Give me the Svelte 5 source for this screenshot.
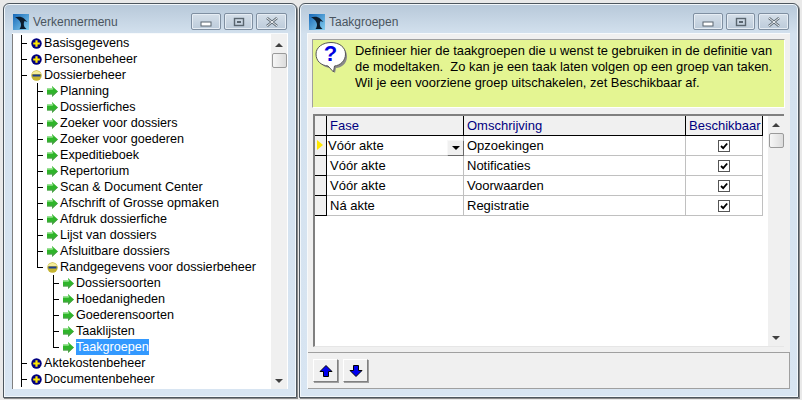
<script>
	// tree: g = guide cells in front of the icon (p pipe, b blank, t tee, l last)
	const tree = [
		{ g: 't', icon: 'plus', label: 'Basisgegevens' },
		{ g: 't', icon: 'plus', label: 'Personenbeheer' },
		{ g: 't', icon: 'minus', label: 'Dossierbeheer' },
		{ g: 'pt', icon: 'arrow', label: 'Planning' },
		{ g: 'pt', icon: 'arrow', label: 'Dossierfiches' },
		{ g: 'pt', icon: 'arrow', label: 'Zoeker voor dossiers' },
		{ g: 'pt', icon: 'arrow', label: 'Zoeker voor goederen' },
		{ g: 'pt', icon: 'arrow', label: 'Expeditieboek' },
		{ g: 'pt', icon: 'arrow', label: 'Repertorium' },
		{ g: 'pt', icon: 'arrow', label: 'Scan & Document Center' },
		{ g: 'pt', icon: 'arrow', label: 'Afschrift of Grosse opmaken' },
		{ g: 'pt', icon: 'arrow', label: 'Afdruk dossierfiche' },
		{ g: 'pt', icon: 'arrow', label: 'Lijst van dossiers' },
		{ g: 'pt', icon: 'arrow', label: 'Afsluitbare dossiers' },
		{ g: 'pl', icon: 'minus', label: 'Randgegevens voor dossierbeheer' },
		{ g: 'pbt', icon: 'arrow', label: 'Dossiersoorten' },
		{ g: 'pbt', icon: 'arrow', label: 'Hoedanigheden' },
		{ g: 'pbt', icon: 'arrow', label: 'Goederensoorten' },
		{ g: 'pbt', icon: 'arrow', label: 'Taaklijsten' },
		{ g: 'pbl', icon: 'arrow', label: 'Taakgroepen', selected: true },
		{ g: 't', icon: 'plus', label: 'Aktekostenbeheer' },
		{ g: 't', icon: 'plus', label: 'Documentenbeheer' }
	];

	const rows = [
		{ fase: 'Vóór akte', oms: 'Opzoekingen', current: true },
		{ fase: 'Vóór akte', oms: 'Notificaties' },
		{ fase: 'Vóór akte', oms: 'Voorwaarden' },
		{ fase: 'Ná akte', oms: 'Registratie' }
	];
</script>

{#snippet caption(title)}
	<div class="caption">
		<svg class="logo" viewBox="0 0 16 16" width="16" height="16">
			<defs>
				<linearGradient id="sky" x1="0" y1="0" x2="1" y2="1">
					<stop offset="0" stop-color="#1668b8" />
					<stop offset="1" stop-color="#86d0f0" />
				</linearGradient>
			</defs>
			<rect width="16" height="16" fill="url(#sky)" />
			<path d="M2 3.500C5 2 9 2.500 11 4.500L14.500 8 11.500 7C10.500 9 10.500 11 11.500 13L13.500 15H6.500C8 13 8.500 10.500 7.500 8.500 6.500 6 4.500 4.500 2 3.500Z" fill="#0c1c2c" />
		</svg>
		<span class="title">{title}</span>
		<div class="ctrls">
			<div class="ctrl"><svg viewBox="0 0 14 10" width="14" height="10"><rect x="2" y="5" width="10" height="4" fill="#fff" stroke="#5a6670" /></svg></div>
			<div class="ctrl mid"><svg viewBox="0 0 14 10" width="14" height="10"><rect x="2.500" y="1.500" width="9" height="7" fill="none" stroke="#5a6670" stroke-width="1.400" /><rect x="5" y="4" width="4" height="2" fill="#5a6670" /></svg></div>
			<div class="ctrl wide"><svg viewBox="0 0 14 10" width="14" height="10"><path d="M2 1l10 8M12 1L2 9" stroke="#5f6b75" stroke-width="2.600" /><path d="M2 1l10 8M12 1L2 9" stroke="#f4f6f8" stroke-width="1" /></svg></div>
		</div>
	</div>
{/snippet}

{#snippet vscroll()}
	<div class="vscroll">
		<span class="end"><span class="up"></span></span>
		<span class="thumb"></span>
		<span class="grow"></span>
		<span class="end"><span class="down"></span></span>
	</div>
{/snippet}

<div class="desktop">
	<section class="window left">
		{@render caption('Verkennermenu')}
		<div class="client tree-wrap">
			<div class="tree">
				{#each tree as item}
					<div class="node">
						{#each item.g.split('') as g}
							<span class="guide {g}"></span>
						{/each}
						{#if item.icon === 'plus'}
							<svg class="ico" viewBox="0 0 11 11" width="11" height="11">
								<circle cx="5.500" cy="5.500" r="5.200" fill="#000080" />
								<path d="M5.500 2.200v6.600M2.200 5.500h6.600" stroke="#ffe800" stroke-width="2.200" />
							</svg>
						{:else if item.icon === 'minus'}
							<svg class="ico" viewBox="0 0 11 11" width="11" height="11">
								<circle cx="5.500" cy="5.500" r="5.200" fill="#c4b430" />
								<path d="M0.800 4a5 4.500 0 0 1 9.400 0z" fill="#f4ec9a" />
								<rect x="1.500" y="4.500" width="8" height="2" fill="#1c3f8f" />
							</svg>
						{:else}
							<svg class="ico" viewBox="0 0 11 11" width="11" height="11">
								<path d="M0 2.500H5V0L11 5.500 5 11V8.500H0z" fill="#2fb52a" />
								<path d="M0 3.200H5.700V1.400" fill="none" stroke="#a8eca0" stroke-width="0.900" />
								<path d="M0 8H5.500V9.800L10.500 5.500" fill="none" stroke="#5f8f5c" stroke-width="0.700" />
							</svg>
						{/if}
						<span class="label" class:selected={item.selected}>{item.label}</span>
					</div>
				{/each}
			</div>
			{@render vscroll()}
		</div>
	</section>

	<section class="window right">
		{@render caption('Taakgroepen')}
		<div class="client form">
			<div class="hint">
				<svg class="bubble" viewBox="0 0 34 34" width="34" height="34">
					<path d="M18 4c8 0 14 4 14 11.500S26 27 21 27l-1 5-5-5C8 26 4 22 4 15.500 4 8 10 4 18 4z" fill="#8a8a8a" />
					<path d="M16 1.500c8 0 14.500 4.500 14.500 11.500S25 24.500 19.500 25l-1 6-5.500-6C6 24.500 1 20 1 13 1 6 8 1.500 16 1.500z" fill="#fff" stroke="#555" />
					<text x="15.500" y="20" text-anchor="middle" class="q">?</text>
				</svg>
				<p>
					Definieer hier de taakgroepen die u wenst te gebruiken in de definitie van<br />
					de modeltaken.&nbsp; Zo kan je een taak laten volgen op een groep van taken.<br />
					Wil je een voorziene groep uitschakelen, zet Beschikbaar af.
				</p>
			</div>
			<div class="grid-wrap">
				<div class="grid">
					<div class="row head">
						<div class="ind"></div>
						<div class="c fase">Fase</div>
						<div class="c oms">Omschrijving</div>
						<div class="c besch">Beschikbaar</div>
					</div>
					{#each rows as r}
						<div class="row">
							<div class="ind">
								{#if r.current}<span class="cur"></span>{/if}
							</div>
							<div class="c fase" class:editing={r.current}>
								{r.fase}
								{#if r.current}<span class="drop"><span></span></span>{/if}
							</div>
							<div class="c oms">{r.oms}</div>
							<div class="c besch">
								<svg viewBox="0 0 12 12" width="12" height="12">
									<rect x="0.500" y="0.500" width="11" height="11" fill="#fff" stroke="#555" />
									<path d="M3 6l2.200 2.200L9.200 3.500" fill="none" stroke="#000" stroke-width="1.800" />
								</svg>
							</div>
						</div>
					{/each}
				</div>
				{@render vscroll()}
			</div>
			<div class="toolbar">
				<button aria-label="Omhoog">
					<svg viewBox="0 0 14 14" width="14" height="14"><path d="M7 1.500l6 6H9.500v5h-5v-5H1z" fill="#0000f0" stroke="#000" stroke-width="1" /></svg>
				</button>
				<button aria-label="Omlaag">
					<svg viewBox="0 0 14 14" width="14" height="14"><path d="M7 12.500l6-6H9.500v-5h-5v5H1z" fill="#0000f0" stroke="#000" stroke-width="1" /></svg>
				</button>
			</div>
		</div>
	</section>
</div>

<style>
	:global(body) {
		margin: 0;
		background: #e9e9e9;
	}
	.desktop {
		width: 802px;
		height: 400px;
		box-sizing: border-box;
		padding: 3px 2px 0 3px;
		display: flex;
		gap: 2px;
		overflow: hidden;
		font-family: 'Liberation Sans', Arial, sans-serif;
		font-size: 12px;
		color: #000;
	}
	.window {
		box-sizing: border-box;
		height: 395px;
		display: flex;
		flex-direction: column;
		padding: 0 8px 8px;
		border: 1px solid #4d565e;
		border-radius: 6px 6px 0 0;
		background: linear-gradient(to bottom, #b7c8d9 0, #d3e1ee 30px, #d8e5f2 100%);
		box-shadow: inset 0 0 0 1px #f2f7fb, 1px 1px 0 #8a8a8a;
	}
	.left {
		width: 294px;
	}
	.right {
		width: 500px;
		padding-left: 7px;
	}
	.caption {
		height: 29px;
		flex: none;
		display: flex;
		align-items: center;
		padding: 6px 0 0 1px;
		box-sizing: border-box;
	}
	.right .caption {
		padding-left: 2px;
	}
	.logo {
		flex: none;
		margin-right: 4px;
	}
	.title {
		color: #4a5560;
		font-size: 12px;
		flex: 1;
	}
	.ctrls {
		display: flex;
		gap: 3px;
		margin-right: 1px;
	}
	.ctrl {
		width: 30px;
		height: 17px;
		box-sizing: border-box;
		display: flex;
		align-items: center;
		justify-content: center;
		border: 1px solid #7f8fa1;
		border-radius: 2px;
		background: linear-gradient(to bottom, #d5dfe9, #bccbda);
		box-shadow: inset 0 0 0 1px #e6edf4;
	}
	.ctrl.mid {
		width: 29px;
	}
	.ctrl.wide {
		width: 31px;
	}
	.client {
		flex: 1;
		min-height: 0;
		background: #f0f0f0;
	}
	.tree-wrap {
		display: flex;
		background: #fff;
		border-top: 1px solid #f7fafc;
		border-right: 1px solid #fff;
		box-shadow: inset 1px 0 0 #808080;
	}
	.tree {
		flex: 1;
		padding: 1px 0 0 1px;
		overflow: hidden;
	}
	.node {
		height: 16px;
		display: flex;
		align-items: center;
		white-space: nowrap;
	}
	.guide {
		position: relative;
		width: 16px;
		height: 16px;
		flex: none;
	}
	.guide.p::before,
	.guide.t::before,
	.guide.l::before {
		content: '';
		position: absolute;
		left: 8px;
		top: 0;
		bottom: 0;
		border-left: 1px solid #000;
	}
	.guide.l::before {
		bottom: 8px;
	}
	.guide.t::after,
	.guide.l::after {
		content: '';
		position: absolute;
		left: 8px;
		top: 8px;
		width: 6px;
		border-top: 1px solid #000;
	}
	.ico {
		flex: none;
		margin-left: 2px;
		margin-right: 2px;
	}
	.label {
		font-size: 12.6px;
		line-height: 17px;
		height: 16px;
	}
	.label.selected {
		background: #3399ff;
		color: #fff;
	}
	.vscroll {
		width: 16px;
		flex: none;
		display: flex;
		flex-direction: column;
		align-items: center;
		background: #f0f0f0;
		box-sizing: border-box;
	}
	.tree-wrap .vscroll {
		padding-top: 2px;
	}
	.end {
		height: 17px;
		flex: none;
		display: flex;
		align-items: center;
		justify-content: center;
	}
	.up,
	.down {
		width: 0;
		height: 0;
		border-left: 4px solid transparent;
		border-right: 4px solid transparent;
	}
	.up {
		border-bottom: 4px solid #404040;
	}
	.down {
		border-top: 4px solid #404040;
	}
	.thumb {
		width: 15px;
		height: 15px;
		box-sizing: border-box;
		border: 1px solid #9a9a9a;
		border-radius: 2px;
		background: linear-gradient(to right, #f6f6f6, #dcdcdc);
	}
	.grow {
		flex: 1;
	}
	.form {
		display: flex;
		flex-direction: column;
		border-top: 1px solid #f7fafc;
		border-left: 1px solid #f7fafc;
	}
	.hint {
		height: 69px;
		flex: none;
		box-sizing: border-box;
		margin: 5px 5px 6px 4px;
		display: flex;
		padding: 1px 2px;
		gap: 6px;
		background: #e4f592;
		border: 1px solid #a0a0a0;
		border-right-color: #fff;
		border-bottom-color: #fff;
	}
	.bubble {
		flex: none;
	}
	.q {
		font: bold 22px 'Liberation Sans', Arial, sans-serif;
		fill: #0000e0;
	}
	.hint p {
		margin: 2px 0 0;
		line-height: 16px;
		font-size: 12.9px;
		white-space: nowrap;
	}
	.grid-wrap {
		flex: 1;
		min-height: 0;
		display: flex;
		margin: 0 6px 5px 5px;
		background: #fff;
		border-top: 2px solid #808080;
		border-left: 2px solid #808080;
		border-bottom: 1px solid #e6e6e6;
		font-size: 13px;
	}
	.grid {
		flex: 1;
	}
	.row {
		display: flex;
		height: 20px;
	}
	.ind,
	.c {
		box-sizing: border-box;
		height: 20px;
	}
	.ind {
		width: 12px;
		flex: none;
		position: relative;
		background: #f0f0f0;
		border-right: 1px solid #000;
		border-bottom: 1px solid #000;
	}
	.cur {
		position: absolute;
		left: 2px;
		top: 4px;
		border-left: 6px solid #ffe800;
		border-top: 5px solid transparent;
		border-bottom: 5px solid transparent;
	}
	.c {
		padding-left: 3px;
		line-height: 19px;
		border-right: 1px solid #c0c0c0;
		border-bottom: 1px solid #c0c0c0;
		position: relative;
	}
	.head .c {
		background: #f0f0f0;
		color: #000080;
		border-right-color: #000;
		border-bottom-color: #000;
	}
	.fase {
		width: 137px;
	}
	.c.editing {
		padding-left: 1px;
	}
	.oms {
		width: 222px;
	}
	.besch {
		width: 77px;
		padding-left: 0;
		display: flex;
		align-items: center;
		justify-content: center;
	}
	.head .besch {
		display: block;
		padding-left: 3px;
		white-space: nowrap;
	}
	.drop {
		position: absolute;
		right: -1px;
		top: 4px;
		width: 17px;
		height: 16px;
		box-sizing: border-box;
		background: #f0f0f0;
		border: 1px solid;
		border-color: #f8f8f8 #696969 #696969 #f8f8f8;
		display: flex;
		align-items: center;
		justify-content: center;
	}
	.drop span {
		border-left: 4px solid transparent;
		border-right: 4px solid transparent;
		border-top: 4px solid #000;
	}
	.toolbar {
		height: 37px;
		flex: none;
		box-sizing: border-box;
		display: flex;
		gap: 5px;
		padding: 6px 5px;
		background: #f0f0f0;
		border-top: 1px solid #a0a0a0;
		border-bottom: 1px solid #a0a0a0;
		border-right: 1px solid #a0a0a0;
	}
	.toolbar button {
		width: 25px;
		height: 23px;
		padding: 0;
		display: flex;
		align-items: center;
		justify-content: center;
		background: #f0f0f0;
		border: 1px solid;
		border-color: #fff #808080 #808080 #fff;
		box-shadow: 1px 1px 0 #a0a0a0;
	}
</style>
